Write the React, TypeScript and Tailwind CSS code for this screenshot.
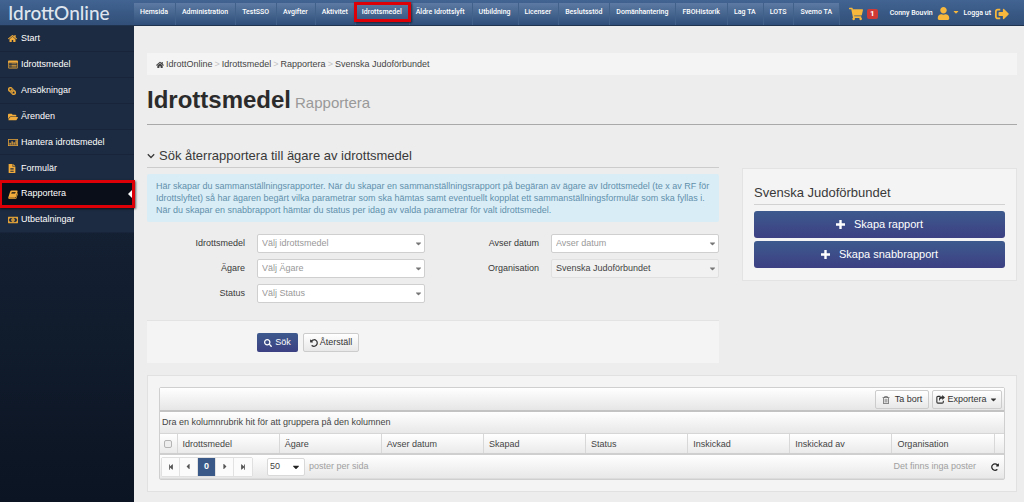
import type { ComponentProps, ReactNode } from "react";
import {
  FaCaretDown,
  FaFolderOpen,
  FaHome,
  FaLink,
  FaRedoAlt,
  FaRegMoneyBillAlt,
  FaRegTrashAlt,
  FaSearch,
  FaShoppingCart,
  FaSignOutAlt,
  FaStepBackward,
  FaStepForward,
  FaUndoAlt,
  FaUser,
} from "react-icons/fa";

const navItems = [
  "Hemsida",
  "Administration",
  "TestSSO",
  "Avgifter",
  "Aktivitet",
  "Idrottsmedel",
  "Äldre Idrottslyft",
  "Utbildning",
  "Licenser",
  "Beslutsstöd",
  "Domänhantering",
  "FBOHistorik",
  "Lag TA",
  "LOTS",
  "Svemo TA",
];

const columns = [
  "Idrottsmedel",
  "Ägare",
  "Avser datum",
  "Skapad",
  "Status",
  "Inskickad",
  "Inskickad av",
  "Organisation",
];

function ListIcon() {
  return (
    <svg viewBox="0 0 18 16" className="h-[9px] w-[10px]" fill="currentColor" aria-hidden="true">
      <path
        fillRule="evenodd"
        d="M1.5 1h15A1.5 1.5 0 0 1 18 2.500v11a1.500 1.500 0 0 1-1.500 1.500h-15A1.500 1.500 0 0 1 0 13.500v-11A1.500 1.500 0 0 1 1.500 1zM1.200 5v8.800h15.600V5zM2.500 6.200h2v1.500h-2zm3.500 0h9.500v1.500H6zM2.500 8.800h2v1.500h-2zm3.500 0h9.500v1.500H6zm-3.500 2.600h2v1.500h-2zm3.500 0h9.500v1.500H6z"
      />
    </svg>
  );
}

function ChartIcon() {
  return (
    <svg viewBox="0 0 20 16" className="h-[9px] w-[10px]" fill="currentColor" aria-hidden="true">
      <path
        fillRule="evenodd"
        d="M1 1h18a1 1 0 0 1 1 1v12a1 1 0 0 1-1 1H1a1 1 0 0 1-1-1V2a1 1 0 0 1 1-1zm.500 1.500v11h17v-11zM3 8.500h2.500v4H3zm4-3h2.500v7H7zm4 2h2.500v5H11zm4-4h2.500v9H15z"
      />
    </svg>
  );
}

function FormIcon() {
  return (
    <svg viewBox="0 0 14 16" className="h-[9px] w-[8px]" fill="currentColor" aria-hidden="true">
      <path
        fillRule="evenodd"
        d="M1 0h7v5h5v10a1 1 0 0 1-1 1H2a1 1 0 0 1-1-1zm8.200 0L13 3.800H9.200zM4 7v1.300h6V7zm0 2.800v1.300h6V9.800zm0 2.700v1.300h6v-1.300z"
      />
    </svg>
  );
}

function BookIcon() {
  return (
    <svg viewBox="0 0 18 16" className="h-[9px] w-[10px]" fill="currentColor" aria-hidden="true">
      <path
        fillRule="evenodd"
        d="M6.500 1h9.300c1.100 0 1.800.9 1.400 2l-3 9.500c-.3.900-1 1.300-1.900 1.300H3c-.5 0-1 .2-.8.600.1.400.5.500 1 .500h10c.5 0 .8-.3 1-.8L17 5.200c.8.300 1 1 .7 1.800l-2.400 7.600c-.3.900-1.100 1.400-2 1.400H3c-1.800 0-3-1.500-2.400-3.200L3.800 2.900C4.200 1.700 5.200 1 6.500 1zm.3 2.700-.3 1h7l.3-1zM6 6.200l-.3 1h7l.3-1z"
      />
    </svg>
  );
}

function PlusIcon() {
  return (
    <svg viewBox="0 0 9 9" className="size-[9px]" fill="currentColor" aria-hidden="true">
      <path d="M3.300 0h2.400v3.300H9v2.400H5.700V9H3.300V5.700H0V3.300h3.300z" />
    </svg>
  );
}

function ShareIcon() {
  return (
    <svg viewBox="0 0 16 16" className="size-[9px]" aria-hidden="true">
      <path d="M8 2.500H3.500a2 2 0 0 0-2 2v8a2 2 0 0 0 2 2h7.500a2 2 0 0 0 2-2V10" fill="none" stroke="currentColor" strokeWidth="2" />
      <path d="M11 0l5 4.500L11 9V6.300C8 6.300 6.500 7.500 7 11 3.500 6.500 6 2.800 11 2.800z" fill="currentColor" />
    </svg>
  );
}

const menu: { label: string; icon: ReactNode; active?: boolean }[] = [
  { label: "Start", icon: <FaHome /> },
  { label: "Idrottsmedel", icon: <ListIcon /> },
  { label: "Ansökningar", icon: <FaLink className="size-2 rotate-90 stroke-current stroke-[30]" /> },
  { label: "Ärenden", icon: <FaFolderOpen className="size-[10px]" /> },
  { label: "Hantera idrottsmedel", icon: <ChartIcon /> },
  { label: "Formulär", icon: <FormIcon /> },
  { label: "Rapportera", icon: <BookIcon />, active: true },
  { label: "Utbetalningar", icon: <FaRegMoneyBillAlt className="size-[10px] stroke-current stroke-[30]" /> },
];

function Marker({ className }: { className: string }) {
  return (
    <span
      className={`pointer-events-none absolute z-10 border-3 border-[#dd0006] shadow-[1px_1px_2px_rgba(0,0,0,0.6)] ${className}`}
    />
  );
}

function Header() {
  return (
    <header className="flex h-[26px] border-b border-[#1f334e] bg-linear-to-b from-[#426492] to-[#314f78] text-white">
      <a
        href="#"
        className="flex w-[134px] shrink-0 items-center pl-2 font-[Lato,sans-serif] text-[19px] leading-6 font-medium text-[#dfe5ee]"
      >
        IdrottOnline
      </a>
      <nav className="mt-[3px] flex shrink-0 bg-linear-to-b from-[#5c7aa3] to-[#2f4f7a] font-[Roboto,sans-serif] text-[7px] leading-[19px] font-medium">
        {navItems.map((item) => (
          <a key={item} href="#" className="relative border-r border-[#41608a] pr-[7px] pl-[6px] whitespace-nowrap">
            {item}
            {item === "Idrottsmedel" && <Marker className="-inset-x-[2px] -top-px bottom-[3px]" />}
          </a>
        ))}
      </nav>
      <div className="flex flex-1 items-center pt-[2px] pl-[9px] font-[Roboto,sans-serif] text-[7px] font-medium whitespace-nowrap">
        <a href="#" aria-label="Varukorg" className="flex items-center">
          <FaShoppingCart className="size-[14px] text-[#f6b73c]" />
          <span className="ml-1 rounded-xs bg-[#cf3a36] px-[3px] text-[8px] leading-[10px] font-bold">1</span>
        </a>
        <button type="button" className="ml-3 flex items-center">
          Conny Bouvin
          <FaUser className="ml-1 size-[13px] text-[#f6b73c]" />
          <FaCaretDown className="mb-1 ml-[2px] size-2 text-[#f6b73c]" />
        </button>
        <a href="#" className="ml-1 flex items-center">
          Logga ut
          <FaSignOutAlt className="ml-1 size-[14px] text-[#f6b73c]" />
        </a>
      </div>
    </header>
  );
}

function Sidebar() {
  return (
    <aside className="w-[134px] shrink-0 bg-linear-to-b from-[#1b2a40] to-[#0b1422]">
      <nav className="grid h-[207px] grid-rows-8">
        {menu.map(({ label, icon, active }) => (
          <a
            key={label}
            href="#"
            className={`relative flex items-center border-b border-[#17243a] pt-px pl-2 text-[9px] text-white ${
              active ? "bg-[#090e18]" : "bg-[#1c2b41]"
            }`}
          >
            <span className="flex w-[13px] items-center text-[#f0ab3a]">{icon}</span>
            {label}
            {active && (
              <>
                <span className="absolute right-[2px] border-y-4 border-r-4 border-y-transparent border-r-white" />
                <Marker className="-inset-x-px -top-px -bottom-[2px]" />
              </>
            )}
          </a>
        ))}
      </nav>
    </aside>
  );
}

function SelectField({
  id,
  label,
  value,
  filled,
}: {
  id: string;
  label: string;
  value: string;
  filled?: boolean;
}) {
  return (
    <div className="flex items-center">
      <label htmlFor={id} className="w-[98px] shrink-0 pt-px text-right text-[#393939]">
        {label}
      </label>
      <div className="relative ml-3 w-[168px]">
        <select
          id={id}
          className={`block h-[19px] w-full appearance-none rounded-xs border pt-px pl-1 ${
            filled ? "border-[#e0e0e0] bg-[#f1f1f1] text-[#444]" : "border-[#cfcfcf] bg-white text-[#999]"
          }`}
        >
          <option>{value}</option>
        </select>
        <FaCaretDown className="pointer-events-none absolute top-[5px] right-[2px] size-[9px] text-[#777]" />
      </div>
    </div>
  );
}

function GreyButton({ className = "", ...props }: ComponentProps<"button">) {
  return (
    <button
      type="button"
      className={`flex h-[19px] items-center justify-center rounded-xs border border-[#cccccc] bg-linear-to-b from-white to-[#e8e8e8] pt-px text-[9px] text-[#333] ${className}`}
      {...props}
    />
  );
}

function SearchSection() {
  return (
    <section className="min-w-0 flex-1">
      <h2 className="flex h-[24px] items-center border-b border-[#cccccc] text-[13px] text-[#393939]">
        <svg viewBox="0 0 8 8" className="mr-1 size-2" fill="none" stroke="currentColor" strokeWidth="1.3" aria-hidden="true">
          <path d="M.8 2.300 4 5.500l3.200-3.200" />
        </svg>
        Sök återrapportera till ägare av idrottsmedel
      </h2>
      <p className="mt-[6px] rounded-xs bg-[#d9edf7] px-[9px] py-[6px] text-[9px] leading-3 text-[#6190ab]">
        Här skapar du sammanställningsrapporter. När du skapar en sammanställningsrapport på begäran av ägare av
        Idrottsmedel (te x av RF för Idrottslyftet) så har ägaren begärt vilka parametrar som ska hämtas samt eventuellt
        kopplat ett sammanställningsformulär som ska fyllas i. När du skapar en snabbrapport hämtar du status per idag av
        valda parametrar för valt idrottsmedel.
      </p>
      <form>
        <div className="mt-3 flex items-start justify-between text-[9px]">
          <div className="grid gap-[6px]">
            <SelectField id="medel" label="Idrottsmedel" value="Välj idrottsmedel" />
            <SelectField id="agare" label="Ägare" value="Välj Ägare" />
            <SelectField id="status" label="Status" value="Välj Status" />
          </div>
          <div className="grid gap-[6px]">
            <SelectField id="datum" label="Avser datum" value="Avser datum" />
            <SelectField id="organisation" label="Organisation" value="Svenska Judoförbundet" filled />
          </div>
        </div>
        <div className="mt-[17px] flex h-[43px] items-center gap-[5px] border-t border-[#e3e3e3] bg-[#f4f4f4] pl-[110px]">
          <button
            type="button"
            className="flex h-[19px] w-[41px] items-center justify-center gap-[3px] rounded-xs bg-linear-to-b from-[#3d5a8d] to-[#3c4083] pt-px text-[9px] text-white"
          >
            <FaSearch className="size-2" />
            Sök
          </button>
          <GreyButton className="w-[56px] gap-[2px]">
            <FaUndoAlt className="size-2" />
            Återställ
          </GreyButton>
        </div>
      </form>
    </section>
  );
}

function CreateButton({ children }: { children: ReactNode }) {
  return (
    <button
      type="button"
      className="flex h-[27px] w-full items-center justify-center gap-[9px] rounded-[3px] bg-linear-to-b from-[#3d5a8d] to-[#3c4083] text-[11px] text-white"
    >
      <PlusIcon />
      {children}
    </button>
  );
}

function CreatePanel() {
  return (
    <section className="mt-[24px] h-[113px] w-[275px] shrink-0 border border-[#e3e3e3] bg-[#f4f4f4] px-[11px] pt-[12px]">
      <h2 className="flex h-[24px] items-center border-b border-[#d2d2d2] text-[13px] text-[#393939]">
        Svenska Judoförbundet
      </h2>
      <div className="mt-[6px] grid gap-[3px]">
        <CreateButton>Skapa rapport</CreateButton>
        <CreateButton>Skapa snabbrapport</CreateButton>
      </div>
    </section>
  );
}

function PageButton({ label, children, current }: { label: string; children: ReactNode; current?: boolean }) {
  return (
    <button
      type="button"
      aria-label={label}
      className={`flex h-[18px] w-[18px] items-center justify-center border-r border-[#e2e2e2] last:border-r-0 ${
        current ? "bg-[#3b5988] font-bold text-white" : "bg-[#fbfbfb] text-[#555]"
      }`}
    >
      {children}
    </button>
  );
}

function ReportGrid() {
  return (
    <section className="mt-[12px] border border-[#e1e1e1] bg-[#f4f4f4] p-[11px] text-[9px] text-[#444]">
      <div className="rounded-xs border border-[#cfcfcf]">
        <div className="flex h-[24px] items-center justify-end gap-[3px] border-b-2 border-[#c3c3c3] bg-linear-to-b from-white to-[#e6e6e6] pr-[2px]">
          <GreyButton className="w-[54px] gap-[5px]">
            <FaRegTrashAlt className="size-2 text-[#666]" />
            Ta bort
          </GreyButton>
          <GreyButton className="w-[70px] gap-[2px]">
            <ShareIcon />
            Exportera
            <FaCaretDown className="size-[9px]" />
          </GreyButton>
        </div>
        <div className="flex h-[22px] items-center border-b border-[#d6d6d6] bg-linear-to-b from-white to-[#e8e8e8] pt-px pl-[2px]">
          Dra en kolumnrubrik hit för att gruppera på den kolumnen
        </div>
        <table className="w-full table-fixed border-collapse bg-linear-to-b from-white to-[#e9e9e9]">
          <thead>
            <tr className="h-[20px] border-b-2 border-[#cfcfcf]">
              <th className="w-[17px] p-0">
                <input
                  type="checkbox"
                  aria-label="Markera alla"
                  className="mx-auto block size-2 appearance-none rounded-xs border border-[#b4b4b4] bg-[#eeeeee]"
                />
              </th>
              {columns.map((column) => (
                <th key={column} className="border-l border-[#d8d8d8] p-0 pt-[2px] pl-[5px] text-left font-normal">
                  {column}
                </th>
              ))}
              <th className="w-[10px] border-l border-[#d8d8d8] p-0" />
            </tr>
          </thead>
        </table>
        <div className="flex h-[24px] items-center border-b border-[#dcdcdc] bg-linear-to-b from-white to-[#e8e8e8] pl-px">
          <div className="flex rounded-xs border border-[#e0e0e0]">
            <PageButton label="Första sidan">
              <FaStepBackward className="size-[6px]" />
            </PageButton>
            <PageButton label="Föregående sida">
              <FaCaretDown className="size-[9px] rotate-90" />
            </PageButton>
            <PageButton label="Sida 0" current>
              0
            </PageButton>
            <PageButton label="Nästa sida">
              <FaCaretDown className="size-[9px] -rotate-90" />
            </PageButton>
            <PageButton label="Sista sidan">
              <FaStepForward className="size-[6px]" />
            </PageButton>
          </div>
          <div className="relative ml-[14px] w-[38px]">
            <select
              id="page-size"
              className="block h-[18px] w-full appearance-none rounded-xs border border-[#d9d9d9] bg-white pl-[2px]"
            >
              <option>50</option>
            </select>
            <FaCaretDown className="pointer-events-none absolute top-1 right-1 size-[10px] text-[#222]" />
          </div>
          <label htmlFor="page-size" className="ml-1 text-[#a0a0a0]">
            poster per sida
          </label>
          <span className="ml-auto text-[#a0a0a0]">Det finns inga poster</span>
          <button type="button" aria-label="Uppdatera" className="mr-[5px] ml-[15px]">
            <FaRedoAlt className="size-2 text-[#222]" />
          </button>
        </div>
      </div>
    </section>
  );
}

export default function App() {
  return (
    <div className="flex min-h-screen flex-col bg-[#ededed] font-['Liberation_Sans',Arial,sans-serif]">
      <Header />
      <div className="flex flex-1">
        <Sidebar />
        <main className="min-w-0 flex-1 pt-[27px] pr-[7px] pb-[11px] pl-[13px]">
          <nav
            aria-label="Brödsmulor"
            className="flex h-[22px] items-center gap-[2px] bg-[#f4f4f4] pt-px pl-[9px] text-[9px] text-[#444]"
          >
            <a href="#" className="flex items-center gap-[2px]">
              <FaHome className="size-2" />
              IdrottOnline
            </a>
            <span className="text-[#c4c4c4]">&gt;</span>
            <a href="#">Idrottsmedel</a>
            <span className="text-[#c4c4c4]">&gt;</span>
            <a href="#">Rapportera</a>
            <span className="text-[#c4c4c4]">&gt;</span>
            <span>Svenska Judoförbundet</span>
          </nav>
          <h1 className="flex h-[50px] items-baseline gap-1 border-b border-[#a9a9a9] pt-[10px] text-[24px] leading-[30px] font-bold text-[#2b2b2b]">
            Idrottsmedel
            <small className="text-[15px] font-normal text-[#999]">Rapportera</small>
          </h1>
          <div className="mt-[19px] flex items-start gap-[23px]">
            <SearchSection />
            <CreatePanel />
          </div>
          <ReportGrid />
        </main>
      </div>
    </div>
  );
}
